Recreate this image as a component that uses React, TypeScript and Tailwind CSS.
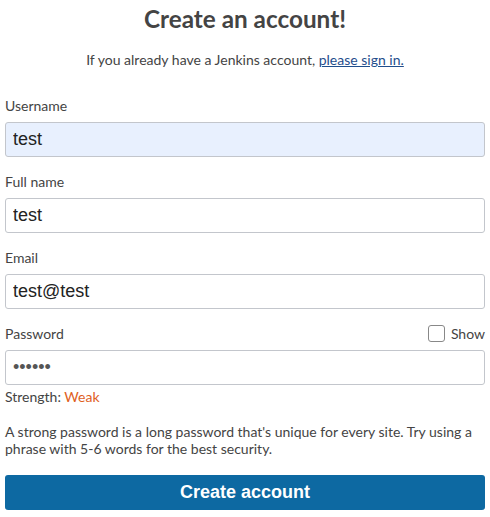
import React from "react";

const Field = ({ label, value, type = "text", filled = false, extra }: { label: string; value: string; type?: string; filled?: boolean; extra?: React.ReactNode }) => (
  <div className="flex flex-col">
    <div className="flex h-[19px] items-center justify-between text-[14px] text-[#444]">
      <label>{label}</label>
      {extra}
    </div>
    <input
      type={type}
      defaultValue={value}
      className={`mt-[7px] h-[35px] w-full rounded-[3px] border border-[#c3c6cc] px-[7px] text-[18px] outline-none ${type === "password" ? "text-[14px] text-[#555]" : "text-[#222]"} ${filled ? "bg-[#e8f0fe]" : "bg-white"}`}
      style={{ fontFamily: '"Liberation Sans", Arial, sans-serif' }}
    />
  </div>
);

export default function App() {
  return (
    <div className="min-h-[517px] bg-white px-[5px] text-[#333]" style={{ fontFamily: "Lato, sans-serif" }}>
      <h1 className="pt-[3px] text-center text-[24.3px] font-bold leading-[32px] text-[#444]">Create an account!</h1>
      <p className="mt-[16px] text-center text-[14px] leading-[18px] text-[#444]">
        If you already have a Jenkins account,{" "}
        <a href="#" className="text-[#1f4e8c] underline">please sign in.</a>
      </p>
      <form className="mt-[27px] flex flex-col gap-[15px]">
        <Field label="Username" value="test" filled />
        <Field label="Full name" value="test" />
        <Field label="Email" value="test@test" />
        <div className="flex flex-col">
          <Field
            label="Password"
            value="testte"
            type="password"
            extra={
              <label className="flex items-center gap-[6px]">
                <span className="block h-[17px] w-[17px] rounded-[3px] border border-[#888] bg-white" />
                <span>Show</span>
              </label>
            }
          />
          <div className="mt-[2px] text-[14px] leading-[20px] text-[#444]">
            Strength: <span className="text-[#e0601d]">Weak</span>
          </div>
          <p className="mt-[16px] text-[14px] leading-[17px] text-[#444]">
            A strong password is a long password that's unique for every site. Try using a phrase with 5-6 words for the best security.
          </p>
          <button
            type="button"
            className="mt-[18px] h-[35px] w-full rounded-[3px] bg-[#0d69a2] text-[18px] font-bold text-white"
            style={{ fontFamily: '"Liberation Sans", Arial, sans-serif' }}
          >
            Create account
          </button>
        </div>
      </form>
    </div>
  );
}
